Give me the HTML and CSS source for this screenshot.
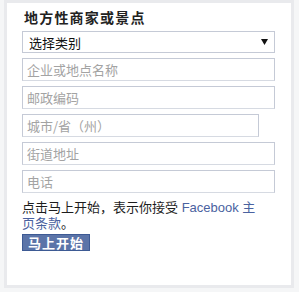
FILE: index.html
```html
<!DOCTYPE html>
<html>
<head>
<meta charset="utf-8">
<link rel="stylesheet" href="styles.css">
</head>
<body>
<div class="panel">
  <div class="title">地方性商家或景点</div>
  <div class="select"><span>选择类别</span><svg class="arrow" width="7" height="6" viewBox="0 0 7 6"><path d="M0 0H7L3.5 6Z" fill="#111"/></svg></div>
  <input class="field" type="text" placeholder="企业或地点名称">
  <input class="field" type="text" placeholder="邮政编码">
  <input class="field short" type="text" placeholder="城市/省（州）">
  <input class="field" type="text" placeholder="街道地址">
  <input class="field" type="text" placeholder="电话">
  <p class="terms">点击马上开始，表示你接受 <a class="link">Facebook 主页条款</a>。</p>
  <button class="btn">马上开始</button>
</div>
</body>
</html>
```
FILE: styles.css
```css
html, body {
  margin: 0;
  padding: 0;
  background: #f5f6f7;
}
body {
  font-family: "Liberation Sans", "Noto Sans CJK SC", sans-serif;
  color: #1d1d1d;
}
.panel {
  box-sizing: border-box;
  width: 290px;
  height: 288px;
  margin-left: 4px;
  border: 3px solid #e9eaed;
  background: #fff;
  padding: 6px 15px 0 15px;
  display: flex;
  flex-direction: column;
  align-items: flex-start;
}
.title {
  font-family: "Noto Sans CJK SC", sans-serif;
  font-size: 14px;
  font-weight: bold;
  line-height: 17px;
  letter-spacing: 1.2px;
  color: #222;
  margin-left: 2px;
}
.select {
  box-sizing: border-box;
  margin-top: 5px;
  width: 253px;
  height: 22px;
  border: 1px solid #c5cad6;
  display: flex;
  align-items: center;
  justify-content: space-between;
  padding: 0 6px 0 6px;
  font-family: "Noto Sans CJK SC", sans-serif;
  font-size: 13px;
  color: #111;
}
.arrow {
  display: block;
}
.field {
  box-sizing: border-box;
  margin: 5px 0 0 0;
  width: 253px;
  height: 23px;
  border: 1px solid #c5cad6;
  border-bottom-color: #d6dae2;
  padding: 0 4px;
  font-family: "Noto Sans CJK SC", sans-serif;
  font-size: 13px;
  color: #111;
  outline: none;
}
.field.short {
  width: 237px;
}
.field::placeholder {
  color: #a3a3a3;
}
.terms {
  margin: 7px 0 0 0;
  font-size: 13px;
  line-height: 16px;
  color: #1d1d1d;
  width: 242px;
}
.link {
  color: #4a62a0;
}
.btn {
  margin-top: 2px;
  box-sizing: border-box;
  width: 68px;
  height: 17px;
  padding: 0;
  border: 1px solid #3d5a94;
  background: #5b74a8;
  color: #fff;
  font-family: "Noto Sans CJK SC", sans-serif;
  font-weight: bold;
  font-size: 13px;
  line-height: 15px;
  letter-spacing: 1px;
}
```
